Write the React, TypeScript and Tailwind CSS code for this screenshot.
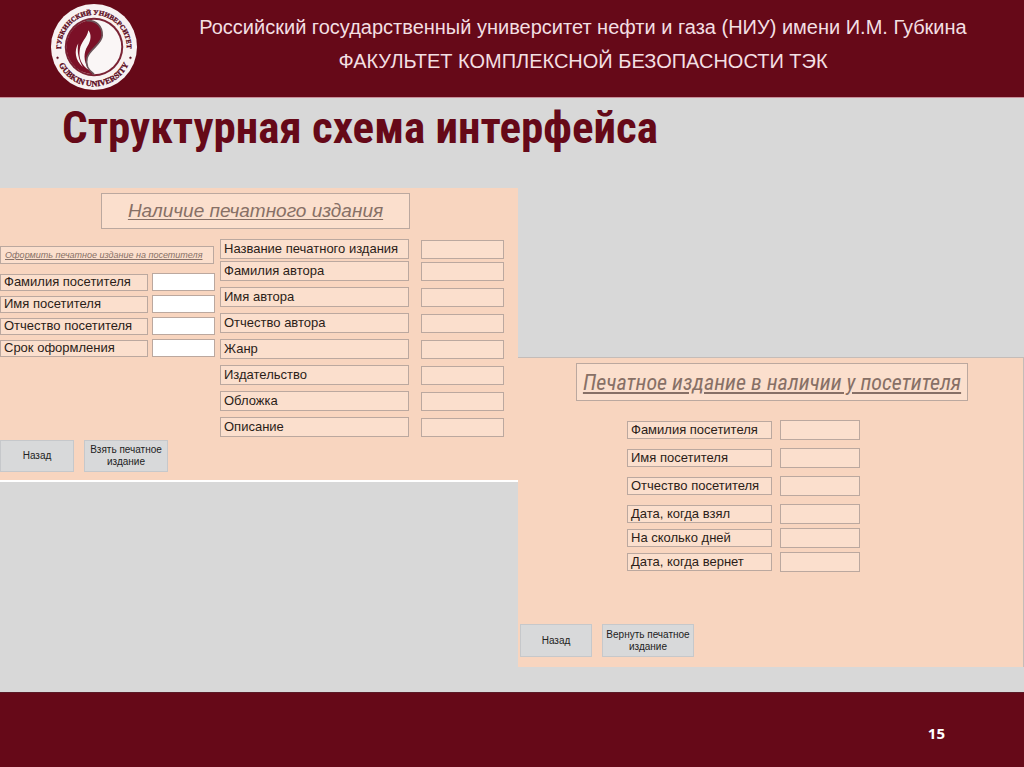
import React from "react";

type Row = { id: string; label: string; gap: string };

const visitorRows: Row[] = [
  { id: "visitor-surname", label: "Фамилия посетителя", gap: "" },
  { id: "visitor-name", label: "Имя посетителя", gap: "mt-1" },
  { id: "visitor-patronymic", label: "Отчество посетителя", gap: "mt-1" },
  { id: "visitor-term", label: "Срок оформления", gap: "mt-1" },
];

const editionRows: Row[] = [
  { id: "edition-title", label: "Название печатного издания", gap: "" },
  { id: "author-surname", label: "Фамилия автора", gap: "mt-0.5" },
  { id: "author-name", label: "Имя автора", gap: "mt-1.5" },
  { id: "author-patronymic", label: "Отчество автора", gap: "mt-1.5" },
  { id: "edition-genre", label: "Жанр", gap: "mt-1.5" },
  { id: "edition-publisher", label: "Издательство", gap: "mt-1.5" },
  { id: "edition-cover", label: "Обложка", gap: "mt-1.5" },
  { id: "edition-description", label: "Описание", gap: "mt-1.5" },
];

const loanRows: Row[] = [
  { id: "loan-surname", label: "Фамилия посетителя", gap: "" },
  { id: "loan-name", label: "Имя посетителя", gap: "mt-2" },
  { id: "loan-patronymic", label: "Отчество посетителя", gap: "mt-2" },
  { id: "loan-taken", label: "Дата, когда взял", gap: "mt-2" },
  { id: "loan-days", label: "На сколько дней", gap: "mt-1" },
  { id: "loan-return", label: "Дата, когда вернет", gap: "mt-1" },
];

function Logo() {
  return (
    <svg viewBox="24 5 268 268" className="h-[88px] w-[88px] shrink-0" role="img" aria-label="Gubkin University">
      <defs>
        <path id="ring-top" d="M60 161 A100 100 0 1 1 256 161" />
        <path id="ring-bottom" d="M45 178 A118 118 0 0 0 269 178" />
      </defs>
      <circle cx="158" cy="139" r="131" fill="#f8f1f1" />
      <circle cx="158" cy="139" r="89" fill="#7a2234" />
      <circle cx="158" cy="139" r="83" fill="#faf6f6" />
      <path
        d="M158 222 A83 83 0 0 1 135 59 C165 56 184 77 183 104 C182 130 144 146 137 172 C131 194 142 211 158 222Z"
        fill="#7b1027"
      />
      <path
        d="M141 88 C151 101 149 120 138 137 C127 155 124 181 143 209 C119 195 110 171 115 145 C118 124 137 111 141 88Z"
        fill="#faf6f6"
      />
      <path d="M110 128 C97 150 100 178 124 200 C110 174 106 152 110 128Z" fill="#faf6f6" />
      <path
        d="M135 59 C165 56 184 77 183 104 C182 130 144 146 137 172 C131 194 142 211 158 222"
        fill="none"
        stroke="#6b5258"
        strokeWidth="5"
      />
      <g
        fill="#5c0c1e"
        stroke="#5c0c1e"
        strokeWidth="1"
        fontFamily="'Liberation Serif', serif"
        fontWeight="bold"
        textAnchor="middle"
      >
        <text fontSize="21">
          <textPath href="#ring-top" startOffset="50%">
            ГУБКИНСКИЙ УНИВЕРСИТЕТ
          </textPath>
        </text>
        <text fontSize="25">
          <textPath href="#ring-bottom" startOffset="50%">
            GUBKIN UNIVERSITY
          </textPath>
        </text>
        <circle cx="47" cy="172" r="3" />
        <circle cx="269" cy="172" r="3" />
      </g>
    </svg>
  );
}

function FormRow({
  row,
  rowClass,
  labelClass,
  inputClass,
}: {
  row: Row;
  rowClass: string;
  labelClass: string;
  inputClass: string;
}) {
  return (
    <div className={`flex items-center ${rowClass} ${row.gap}`}>
      <label
        htmlFor={row.id}
        className={`flex items-center border border-[#bba89f] bg-[#fbdfcd] whitespace-nowrap text-[#2b1d18] ${labelClass}`}
      >
        {row.label}
      </label>
      <input id={row.id} type="text" className={`min-w-0 border border-[#bba89f] px-1 text-xs ${inputClass}`} />
    </div>
  );
}

function PanelButton({ className, children }: { className: string; children: React.ReactNode }) {
  return (
    <button
      type="button"
      className={`border border-[#c6c8cb] bg-[#d8d9da] text-[10px] leading-3 text-[#222222] ${className}`}
    >
      {children}
    </button>
  );
}

export default function App() {
  return (
    <div className="flex min-h-screen flex-col bg-[#d8d8d8] font-['Liberation_Sans',sans-serif]">
      <header className="flex items-start border-b border-[#c9929c] bg-[#660918] pt-[3px] pb-1.5 pl-[50px]">
        <Logo />
        <div className="flex-1 pt-[7px] pl-[4px] pr-[-6px] text-center text-[20px] leading-[34px] text-[#f3dfe2]">
          <p>Российский государственный университет нефти и газа (НИУ) имени И.М. Губкина</p>
          <p>ФАКУЛЬТЕТ КОМПЛЕКСНОЙ БЕЗОПАСНОСТИ ТЭК</p>
        </div>
      </header>

      <main className="flex-1">
        <h1 className="pt-1 pb-[34px] pl-[62px] font-['Roboto_Condensed','Roboto',sans-serif] text-[45px] leading-[52px] font-bold text-[#660918]">
          Структурная схема интерфейса
        </h1>

        <div className="grid grid-cols-[518fr_506fr] items-start">
          <section className="border-b-2 border-white bg-[#f8d5bf] pt-[5px] pb-2">
            <h2 className="ml-[101px] flex h-9 w-[309px] items-center justify-center border border-[#bba89f] bg-[#fbdfcd] text-[19px] text-[#877066] italic underline underline-offset-2">
              Наличие печатного издания
            </h2>
            <div className="mt-[10px] flex items-start gap-[5px]">
              <div className="w-[215px] pt-[7px]">
                <h3 className="mb-[9px] flex h-[18px] w-[214px] items-center border border-[#bba89f] bg-[#fbdfcd] pt-0.5 pl-1 text-[9px] whitespace-nowrap text-[#877066] italic underline">
                  Оформить печатное издание на посетителя
                </h3>
                {visitorRows.map((row) => (
                  <FormRow
                    key={row.id}
                    row={row}
                    rowClass="h-[18px] gap-1"
                    labelClass="h-[17px] w-[148px] pl-[3px] text-[13px]"
                    inputClass="h-[18px] flex-1 bg-white"
                  />
                ))}
              </div>
              <div>
                {editionRows.map((row) => (
                  <FormRow
                    key={row.id}
                    row={row}
                    rowClass="h-5 gap-3"
                    labelClass="h-5 w-[189px] pl-[3px] text-[13px]"
                    inputClass="h-[19px] w-[83px] bg-[#fbdfcd]"
                  />
                ))}
              </div>
            </div>
            <div className="mt-[3px] flex items-center gap-[10px]">
              <PanelButton className="h-8 w-[74px]">Назад</PanelButton>
              <PanelButton className="h-8 w-[84px]">Взять печатное издание</PanelButton>
            </div>
          </section>

          <section className="mt-[169px] border-t border-r border-[#c4bcb8] bg-[#f8d5bf] pt-[5px] pb-[10px]">
            <h2 className="ml-[58px] flex h-[38px] w-[392px] items-center justify-center border border-[#bba89f] bg-[#fbdfcd] font-['Roboto_Condensed','Roboto',sans-serif] text-[22px] whitespace-nowrap text-[#877066] italic underline underline-offset-2">
              Печатное издание в наличии у посетителя
            </h2>
            <div className="mt-[19px] ml-[109px]">
              {loanRows.map((row) => (
                <FormRow
                  key={row.id}
                  row={row}
                  rowClass="h-5 gap-2"
                  labelClass="h-[18px] w-[145px] pl-[3px] text-[13px]"
                  inputClass="h-5 w-[80px] bg-[#fbdfcd]"
                />
              ))}
            </div>
            <div className="mt-[52px] ml-[2px] flex items-center gap-[10px]">
              <PanelButton className="h-[33px] w-[72px]">Назад</PanelButton>
              <PanelButton className="h-[33px] w-[92px]">Вернуть печатное издание</PanelButton>
            </div>
          </section>
        </div>
      </main>

      <footer className="flex justify-end border-t border-[#5a1a26] bg-[#660918] pt-[30px] pr-[79px] pb-6">
        <span className="font-['Open_Sans',sans-serif] text-[15px] leading-5 font-bold text-white">15</span>
      </footer>
    </div>
  );
}
